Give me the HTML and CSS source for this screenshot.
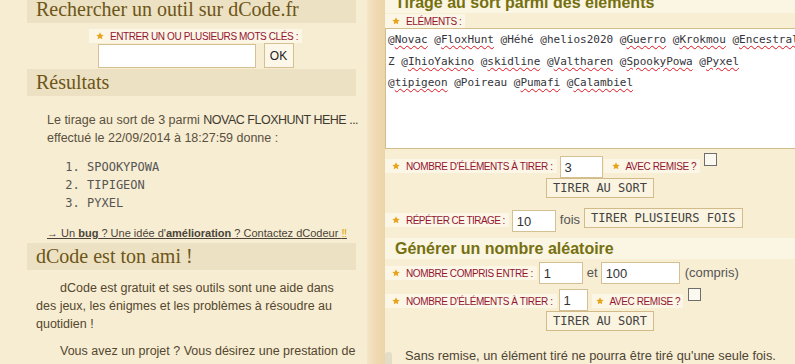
FILE: index.html
```html
<!DOCTYPE html>
<html lang="fr">
<head>
    <meta charset="UTF-8">
    <meta name="viewport" content="width=device-width, initial-scale=1.0">
    <title>Tirage au sort parmi des éléments - dCode</title>
    <link rel="stylesheet" href="styles.css">
</head>
<body>
    <div class="page">
        <aside class="sidebar">
            <h2 class="side-title first">Rechercher un outil sur dCode.fr</h2>
            <form class="search">
                <div class="search-label">
                    <span class="label"><svg class="star" viewBox="0 0 10 10"><path d="M5 .4l1.4 3 3.2.3-2.4 2.2.7 3.2L5 7.4 2.1 9.1l.7-3.2L.4 3.7l3.2-.3z"/></svg>ENTRER UN OU PLUSIEURS MOTS CLÉS :</span>
                </div>
                <div class="search-row">
                    <input type="text" class="search-input">
                    <button type="button" class="btn-ok">OK</button>
                </div>
            </form>

            <h2 class="side-title">Résultats</h2>
            <div class="results">
                <p>Le tirage au sort de 3 parmi <span class="picked-from">NOVAC FLOXHUNT HEHE ...</span><br>effectué le 22/09/2014 à 18:27:59 donne :</p>
                <ol class="picked">
                    <li>SPOOKYPOWA</li>
                    <li>TIPIGEON</li>
                    <li>PYXEL</li>
                </ol>
                <a href="#" class="feedback">→ Un <b>bug</b> ? Une idée d'<b>amélioration</b> ? Contactez dCodeur <span class="bang">‼</span></a>
            </div>

            <h2 class="side-title">dCode est ton ami !</h2>
            <div class="about">
                <p>dCode est gratuit et ses outils sont une aide dans des jeux, les énigmes et les problèmes à résoudre au quotidien !</p>
                <p>Vous avez un projet ? Vous désirez une prestation de développement ou de conseil ? Contactez-nous !</p>
            </div>
        </aside>

        <div class="divider"></div>

        <main class="main">
            <h3 class="tool-title first">Tirage au sort parmi des éléments</h3>
            <div class="field-label">
                <span class="label"><svg class="star" viewBox="0 0 10 10"><path d="M5 .4l1.4 3 3.2.3-2.4 2.2.7 3.2L5 7.4 2.1 9.1l.7-3.2L.4 3.7l3.2-.3z"/></svg>ELÉMENTS :</span>
            </div>
<div class="elements">@<span class="typo">Novac</span> @<span class="typo">FloxHunt</span> @Héhé @helios2020 @<span class="typo">Guerro</span> @<span class="typo">Krokmou</span> @<span class="typo">Encestral</span>
Z @<span class="typo">IhioYakino</span> @<span class="typo">skidline</span> @<span class="typo">Valtharen</span> @<span class="typo">SpookyPowa</span> @<span class="typo">Pyxel</span>
@<span class="typo">tipigeon</span> @Poireau @<span class="typo">Pumafi</span> @<span class="typo">Calambiel</span></div>

            <div class="row row-count">
                <span class="label"><svg class="star" viewBox="0 0 10 10"><path d="M5 .4l1.4 3 3.2.3-2.4 2.2.7 3.2L5 7.4 2.1 9.1l.7-3.2L.4 3.7l3.2-.3z"/></svg>NOMBRE D'ÉLÉMENTS À TIRER :</span>
                <input type="text" class="num num-count" value="3">
                <span class="label label-remise"><svg class="star" viewBox="0 0 10 10"><path d="M5 .4l1.4 3 3.2.3-2.4 2.2.7 3.2L5 7.4 2.1 9.1l.7-3.2L.4 3.7l3.2-.3z"/></svg>AVEC REMISE ?</span>
                <input type="checkbox" class="check">
            </div>
            <div class="btn-row">
                <button type="button" class="btn">TIRER AU SORT</button>
            </div>

            <div class="row row-repeat">
                <span class="label"><svg class="star" viewBox="0 0 10 10"><path d="M5 .4l1.4 3 3.2.3-2.4 2.2.7 3.2L5 7.4 2.1 9.1l.7-3.2L.4 3.7l3.2-.3z"/></svg>RÉPÉTER CE TIRAGE :</span>
                <input type="text" class="num num-repeat" value="10">
                <span class="word">fois</span>
                <button type="button" class="btn">TIRER PLUSIEURS FOIS</button>
            </div>

            <h3 class="tool-title">Générer un nombre aléatoire</h3>
            <div class="row row-range">
                <span class="label"><svg class="star" viewBox="0 0 10 10"><path d="M5 .4l1.4 3 3.2.3-2.4 2.2.7 3.2L5 7.4 2.1 9.1l.7-3.2L.4 3.7l3.2-.3z"/></svg>NOMBRE COMPRIS ENTRE :</span>
                <input type="text" class="num num-min" value="1">
                <span class="word">et</span>
                <input type="text" class="num num-max" value="100">
                <span class="word">(compris)</span>
            </div>
            <div class="row row-count2">
                <span class="label"><svg class="star" viewBox="0 0 10 10"><path d="M5 .4l1.4 3 3.2.3-2.4 2.2.7 3.2L5 7.4 2.1 9.1l.7-3.2L.4 3.7l3.2-.3z"/></svg>NOMBRE D'ÉLÉMENTS À TIRER :</span>
                <input type="text" class="num num-small" value="1">
                <span class="label label-remise"><svg class="star" viewBox="0 0 10 10"><path d="M5 .4l1.4 3 3.2.3-2.4 2.2.7 3.2L5 7.4 2.1 9.1l.7-3.2L.4 3.7l3.2-.3z"/></svg>AVEC REMISE ?</span>
                <input type="checkbox" class="check">
            </div>
            <div class="btn-row">
                <button type="button" class="btn">TIRER AU SORT</button>
            </div>

            <div class="note">
                <div class="note-bar"></div>
                <p>Sans remise, un élément tiré ne pourra être tiré qu'une seule fois.</p>
            </div>
        </main>
    </div>
</body>
</html>
```

FILE: styles.css
```css
html, body {
    margin: 0;
    overflow: hidden;
}

body {
    font-family: "Liberation Sans", Arial, sans-serif;
    background-color: #f7edd2;
    color: #54472f;
}

.page {
    display: flex;
    width: 815px;
    min-height: 100vh;
}

/* left column */

.sidebar {
    width: 367px;
    flex: none;
    box-sizing: border-box;
    padding: 0 11px 0 27px;
}

.side-title {
    margin: 1px 0 0;
    height: 27px;
    padding: 0 9px;
    background-color: #ece1c3;
    color: #6d5518;
    font-family: "Liberation Serif", Georgia, serif;
    font-size: 20px;
    font-weight: normal;
    line-height: 27px;
}

.side-title.first {
    margin-top: -4px;
}

.search {
    margin: 6px 0 0;
    padding-left: 8px;
}

.search-label {
    display: flex;
    justify-content: center;
    height: 14px;
}

.search-row {
    display: flex;
    justify-content: center;
    align-items: flex-end;
    gap: 8px;
}

.search-input {
    width: 158px;
    height: 24px;
    box-sizing: border-box;
    border: 1px solid #d5c092;
    background-color: #fff;
}

.btn-ok {
    width: 30px;
    height: 25px;
    padding: 0;
    border: 1px solid #d5c092;
    background-color: #fcf7e9;
    color: #222;
    font-family: "Liberation Sans", Arial, sans-serif;
    font-size: 12px;
}

.results {
    padding-left: 20px;
}

.results p {
    margin: 15px 0 0;
    font-size: 12.5px;
    line-height: 18px;
    color: #5a5040;
    white-space: nowrap;
}

.picked-from {
    color: #3e3a30;
    letter-spacing: -0.5px;
}

.picked {
    margin: 11px 0 0;
    padding-left: 40px;
    font-family: "DejaVu Sans Mono", monospace;
    font-size: 12px;
    line-height: 18px;
    color: #555;
}

.feedback {
    display: block;
    margin-top: 12px;
    font-size: 11px;
    line-height: 18px;
    color: #4a4438;
    white-space: nowrap;
}

.bang {
    color: #d9a300;
}

.about p {
    margin: 9px 3px 0 0;
    padding: 0 0 0 9px;
    text-indent: 24px;
    font-size: 12.5px;
    line-height: 18px;
}

.about p + p {
    margin-right: -4px;
}

.divider {
    width: 18px;
    flex: none;
    background: linear-gradient(to right, #f4e5c6, #f0dab3 45%, #ecd4aa);
}

/* main column */

.main {
    width: 430px;
    flex: none;
    background-color: #f8eed4;
}

.tool-title {
    margin: 6px 0 0;
    height: 21px;
    padding-left: 10px;
    background-color: #fbf5e3;
    color: #75700f;
    font-size: 16px;
    font-weight: bold;
    line-height: 21px;
}

.tool-title.first {
    margin-top: -8px;
}

.label {
    display: inline-flex;
    align-items: center;
    height: 14px;
    padding: 0 4px 0 7px;
    background-color: #fcf6e6;
    color: #931532;
    font-family: "Liberation Sans", Arial, sans-serif;
    font-size: 10px;
    letter-spacing: -0.4px;
    white-space: nowrap;
}

.star {
    width: 8px;
    height: 8px;
    margin-right: 6px;
    fill: #e9a21b;
    flex: none;
}

.field-label {
    display: flex;
    margin-top: 1px;
    height: 14px;
}

.elements {
    height: 119px;
    padding: 0 2px;
    border: 1px solid #d2bd8c;
    background-color: #fff;
    color: #34343a;
    font-family: "DejaVu Sans Mono", monospace;
    font-size: 11px;
    line-height: 21.5px;
    white-space: pre;
    overflow: hidden;
}

.typo {
    text-decoration: underline wavy #e0141e;
    text-decoration-thickness: 1px;
    text-underline-offset: 2px;
}

.row {
    display: flex;
    align-items: flex-start;
}

.num {
    height: 22px;
    box-sizing: border-box;
    margin: 0;
    padding: 0 4px;
    border: 1px solid #d5c092;
    background-color: #fff;
    color: #333;
    font-family: "Liberation Sans", Arial, sans-serif;
    font-size: 13px;
}

.check {
    appearance: none;
    width: 13px;
    height: 13px;
    margin: 0;
    border: 1px solid #6e6e6e;
    background-color: #fbf8f0;
}

.word {
    font-size: 13px;
    line-height: 18px;
    color: #555;
}

.btn-row {
    text-align: center;
}

.btn {
    height: 20px;
    padding: 0 6px;
    border: 1px solid #d2bb88;
    background-color: #fbf4e0;
    color: #444;
    font-family: "DejaVu Sans Mono", monospace;
    font-size: 12px;
    line-height: 18px;
}

.row-count {
    margin-top: 4px;
}

.row-count .label {
    margin-top: 6px;
}

.num-count {
    width: 43px;
    margin: 3px 0 0 3px;
}

.label-remise {
    margin-left: 1px;
    padding-left: 8px;
    padding-right: 4px;
}

.row-count .check {
    margin-left: 4px;
}

.row-repeat {
    margin-top: 10px;
}

.row-repeat .label {
    margin-top: 5px;
    letter-spacing: -0.55px;
}

.num-repeat {
    width: 44px;
    margin: 2px 0 0 3px;
}

.row-repeat .word {
    margin: 3px 4px 0 4px;
}

.row-range {
    margin-top: 3px;
}

.row-range .label {
    margin-top: 4px;
}

.num-min {
    width: 44px;
    margin-left: 2px;
}

.num-max {
    width: 79px;
    margin-left: 3px;
}

.row-range .word {
    margin: 2px 0 0 4px;
}

.row-range .word:last-child {
    margin-left: 5px;
}

.row-count2 {
    margin-top: 4px;
}

.row-count2 .label {
    margin-top: 6px;
}

.num-small {
    width: 29px;
    margin: 1px 0 0 2px;
}

.row-count2 .label-remise {
    margin-left: 4px;
    padding-left: 4px;
    padding-right: 3px;
}

.row-count2 .check {
    margin-left: 5px;
}

.note {
    display: flex;
    margin-top: 16px;
}

.note-bar {
    width: 7px;
    height: 30px;
    margin-top: 5px;
    border-radius: 3px 3px 0 0;
    background-color: #e3dcc6;
}

.note p {
    margin: 0;
    padding-left: 13px;
    font-size: 12.8px;
    line-height: 18px;
    color: #4d4535;
}
```
